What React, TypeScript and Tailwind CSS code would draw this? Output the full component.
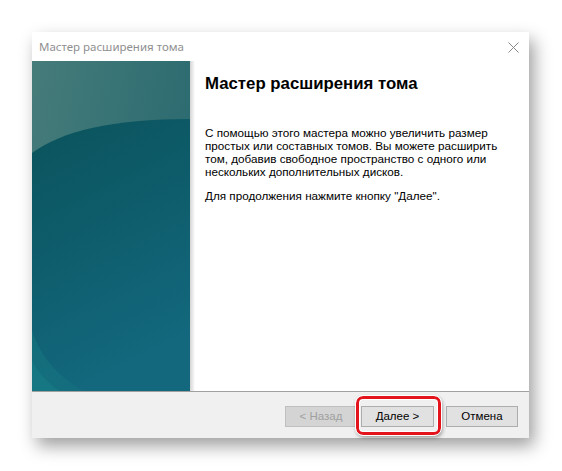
import React from "react";

function WizardArt() {
  return (
    <svg width="158" height="330" viewBox="0 0 158 330" className="block">
      <defs>
        <linearGradient id="topBand" x1="0" y1="0" x2="1" y2="0.4">
          <stop offset="0" stopColor="#467c7a" />
          <stop offset="1" stopColor="#2a6a70" />
        </linearGradient>
        <linearGradient id="lowerBody" x1="0" y1="0" x2="0.3" y2="1">
          <stop offset="0" stopColor="#0b535c" />
          <stop offset="0.5" stopColor="#0e5d6c" />
          <stop offset="1" stopColor="#13687d" />
        </linearGradient>
        <linearGradient id="cornerGlow" x1="0" y1="0" x2="1" y2="1">
          <stop offset="0" stopColor="#1a8285" />
          <stop offset="1" stopColor="#137480" />
        </linearGradient>
      </defs>
      <rect width="158" height="330" fill="url(#topBand)" />
      <path d="M0,92 C30,70 80,58 158,58 L158,330 L0,330 Z" fill="url(#lowerBody)" />
      <path d="M0,270 C10,300 30,318 52,330 L0,330 Z" fill="url(#cornerGlow)" opacity="0.4" />
      <path d="M0,300 C8,314 18,324 28,330 L0,330 Z" fill="#1b8a8c" opacity="0.35" />
    </svg>
  );
}

export default function App() {
  const dlg = { fontFamily: '"Liberation Sans", Arial, sans-serif' };
  return (
    <div className="w-[562px] h-[471px] bg-white pl-[32px] pt-[32px]">
      <div className="w-[497px] h-[406px] bg-white flex flex-col shadow-[5px_8px_16px_rgba(0,0,0,0.38)]">
        {/* title bar */}
        <div className="h-[29px] flex items-center justify-between pl-[7px] pr-[10px]">
          <span
            className="text-[11.5px] text-[#8f8f8f]"
            style={{ fontFamily: '"Noto Sans", sans-serif' }}
          >
            Мастер расширения тома
          </span>
          <svg width="11" height="11" viewBox="0 0 11 11" className="mt-[1px]">
            <path d="M0.5,0.5 L10.5,10.5 M10.5,0.5 L0.5,10.5" stroke="#8a8a8a" strokeWidth="1" />
          </svg>
        </div>

        {/* body */}
        <div className="h-[330px] flex">
          <WizardArt />
          <div className="w-[5px] bg-gradient-to-r from-[#d4d4d4] to-white" />
          <div className="flex-1 bg-white pl-[10px] pt-[13px]" style={dlg}>
            <div className="text-[16.8px] font-bold text-black leading-[20px]">
              Мастер расширения тома
            </div>
            <div className="mt-[32px] text-[11.7px] leading-[13px] text-black">
              <div>С помощью этого мастера можно увеличить размер</div>
              <div>простых или составных томов. Вы можете расширить</div>
              <div>том, добавив свободное пространство с одного или</div>
              <div>нескольких дополнительных дисков.</div>
              <div className="mt-[11px]">Для продолжения нажмите кнопку "Далее".</div>
            </div>
          </div>
        </div>

        <div className="h-px bg-[#a0a0a0]" />

        {/* footer */}
        <div className="h-[46px] bg-[#f0f0f0] relative" style={dlg}>
          <div className="flex pt-[14px] pl-[253px] text-[11.5px]">
            <div className="w-[72px] h-[21px] border border-[#bfbfbf] bg-[#d4d4d4] text-[#a0a0a0] flex items-center justify-center">
              &lt; Назад
            </div>
            <div className="ml-[4px] w-[73px] h-[21px] border border-[#adadad] bg-[#e1e1e1] text-black flex items-center justify-center">
              Далее &gt;
            </div>
            <div className="ml-[12px] w-[72px] h-[21px] border border-[#adadad] bg-[#e1e1e1] text-black flex items-center justify-center">
              Отмена
            </div>
          </div>
          {/* highlight ring around the Next button */}
          <div className="absolute left-[324px] top-[4px] w-[85px] h-[39px] rounded-[7px] border-[3px] border-[#e3141b] outline outline-1 outline-white shadow-[1px_2px_4px_rgba(0,0,0,0.45),inset_0_0_0_1px_white]" />
        </div>
      </div>
    </div>
  );
}
